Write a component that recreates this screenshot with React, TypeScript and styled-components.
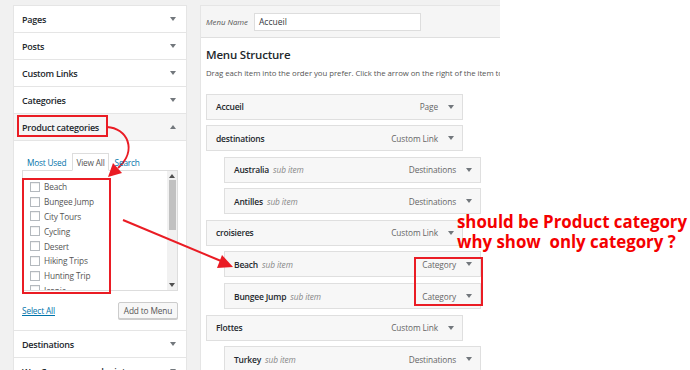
import React from "react";
import styled, {createGlobalStyle} from "styled-components";

const GlobalStyle = createGlobalStyle`
  html, body {
    margin: 0;
    padding: 0;
    background: #fff;
  }
  body {
    font-family: "Open Sans", "Noto Sans", sans-serif;
  }
  * {
    box-sizing: border-box;
  }
`;

const Page = styled.div`
  position: relative;
  width: 690px;
  height: 370px;
  overflow: hidden;
  display: flex;
  background: #fff;
`;

const Admin = styled.div`
  width: 500px;
  flex-shrink: 0;
  display: flex;
  gap: 13px;
  padding: 5px 0 0 13px;
  background: #f1f1f1;
`;

const Sidebar = styled.div`
  width: 174px;
  flex-shrink: 0;
  display: flex;
  flex-direction: column;
`;

const Section = styled.div`
  background: #fff;
  border: 1px solid #e5e5e5;
  border-top: none;
  &:first-child {
    border-top: 1px solid #e5e5e5;
  }
`;

interface OpenProps {
  open?: boolean;
}
const SectionHead = styled.div<OpenProps>`
  height: ${props => (props.open ? "27px" : "26px")};
  display: flex;
  align-items: center;
  justify-content: space-between;
  padding: 0 10px 0 8px;
  font-size: 9px;
  font-weight: 600;
  letter-spacing: -0.25px;
  color: #23282d;
  background: ${props => (props.open ? "#f5f5f5" : "#fff")};
  border-bottom: ${props => (props.open ? "1px solid #e5e5e5" : "none")};
`;

const Caret = styled.span<{up?: boolean; color?: string}>`
  width: 0;
  height: 0;
  border-left: 3px solid transparent;
  border-right: 3px solid transparent;
  ${props =>
    props.up
      ? `border-bottom: 4px solid ${props.color || "#72777c"};`
      : `border-top: 4px solid ${props.color || "#72777c"};`}
`;

const SectionBody = styled.div`
  height: 189px;
  padding: 12px 8px 0 8px;
  display: flex;
  flex-direction: column;
`;

const Tabs = styled.div`
  display: flex;
  align-items: flex-end;
  gap: 2px;
  padding-left: 1px;
  height: 18px;
  margin-bottom: -1px;
  position: relative;
  z-index: 1;
`;

const Tab = styled.span<{active?: boolean}>`
  height: 18px;
  display: flex;
  align-items: center;
  padding: 0 3px;
  font-size: 8.3px;
  letter-spacing: -0.2px;
  color: ${props => (props.active ? "#555" : "#0073aa")};
  background: ${props => (props.active ? "#fff" : "transparent")};
  border: 1px solid ${props => (props.active ? "#ddd" : "transparent")};
  border-bottom-color: ${props => (props.active ? "#fff" : "transparent")};
`;

const ListBox = styled.div`
  height: 121px;
  border: 1px solid #ddd;
  background: #fff;
  display: flex;
  overflow: hidden;
`;

const Items = styled.ul`
  flex: 1;
  list-style: none;
  margin: 0;
  padding: 8.5px 0 0 7px;
  overflow: hidden;
`;

const Item = styled.li`
  height: 14.8px;
  display: flex;
  align-items: center;
  gap: 4px;
  font-size: 8.3px;
  letter-spacing: -0.15px;
  color: #555;
`;

const Check = styled.span`
  width: 10px;
  height: 10px;
  flex-shrink: 0;
  border: 1px solid #b4b9be;
  background: #fff;
  box-shadow: inset 0 1px 1px rgba(0, 0, 0, 0.07);
`;

const ScrollTrack = styled.div`
  width: 10px;
  background: #f1f1f1;
  display: flex;
  flex-direction: column;
  align-items: center;
  justify-content: space-between;
  padding: 3px 0 3px 0;
`;

const Thumb = styled.div`
  width: 7px;
  height: 50px;
  background: #c1c1c1;
  margin-top: 2px;
  margin-bottom: auto;
`;

const Footer = styled.div`
  display: flex;
  align-items: center;
  justify-content: space-between;
  margin-top: 11px;
`;

const Link = styled.a`
  font-size: 8.3px;
  letter-spacing: -0.15px;
  color: #0073aa;
  text-decoration: underline;
`;

const Button = styled.button`
  width: 60px;
  height: 17px;
  padding: 0;
  font-family: inherit;
  font-size: 8.3px;
  letter-spacing: -0.15px;
  color: #555;
  background: #f7f7f7;
  border: 1px solid #ccc;
  border-radius: 2px;
  box-shadow: 0 1px 0 #ccc;
`;

const MenuPanel = styled.div`
  width: 300px;
  display: flex;
  flex-direction: column;
  background: #fff;
  border-left: 1px solid #e5e5e5;
  border-top: 1px solid #e5e5e5;
`;

const MenuHeader = styled.div`
  height: 32px;
  flex-shrink: 0;
  display: flex;
  align-items: center;
  gap: 6px;
  padding-left: 5px;
  background: #f5f5f5;
  border-bottom: 1px solid #dfdfdf;
`;

const NameLabel = styled.span`
  font-size: 7.8px;
  font-style: italic;
  color: #555;
`;

const NameInput = styled.div`
  width: 167px;
  height: 18px;
  display: flex;
  align-items: center;
  padding-left: 4px;
  font-size: 8.5px;
  color: #32373c;
  background: #fff;
  border: 1px solid #ddd;
`;

const MenuBody = styled.div`
  padding: 8px 0 0 5px;
  display: flex;
  flex-direction: column;
`;

const Title = styled.h3`
  margin: 0;
  font-size: 11.5px;
  font-weight: 600;
  letter-spacing: -0.2px;
  color: #23282d;
  line-height: 17px;
`;

const Hint = styled.p`
  margin: 4px 0 0 0;
  font-size: 7.8px;
  letter-spacing: -0.05px;
  color: #555;
  white-space: nowrap;
  line-height: 13px;
`;

const MenuItems = styled.div`
  display: flex;
  flex-direction: column;
  gap: 5.6px;
  margin-top: 13.5px;
`;

const MenuItem = styled.div<{depth: number}>`
  width: 257px;
  height: 26px;
  flex-shrink: 0;
  margin-left: ${props => props.depth * 18}px;
  display: flex;
  align-items: center;
  padding: 0 8px 0 9px;
  background: #f7f7f7;
  border: 1px solid #dfdfdf;
`;

const ItemTitle = styled.span`
  font-size: 8.5px;
  font-weight: 600;
  letter-spacing: -0.2px;
  color: #23282d;
`;

const SubLabel = styled.span`
  margin-left: 4px;
  font-size: 8.3px;
  font-style: italic;
  letter-spacing: -0.1px;
  color: #888;
`;

const ItemType = styled.span`
  margin-left: auto;
  margin-right: 10px;
  font-size: 8.3px;
  letter-spacing: -0.1px;
  color: #666;
`;

const Blank = styled.div`
  flex: 1;
  background: #fff;
`;

const Overlay = styled.div`
  position: absolute;
  inset: 0;
  pointer-events: none;
`;

interface BoxProps {
  x: number;
  y: number;
  w: number;
  h: number;
}
const RedBox = styled.div<BoxProps>`
  position: absolute;
  left: ${props => props.x}px;
  top: ${props => props.y}px;
  width: ${props => props.w}px;
  height: ${props => props.h}px;
  border: 2px solid #ea1c24;
`;

const Note = styled.div`
  position: absolute;
  left: 457px;
  top: 212px;
  font-size: 16.85px;
  font-weight: 700;
  line-height: 20px;
  color: #f40000;
  white-space: pre;
`;

const Arrows = styled.svg`
  position: absolute;
  left: 0;
  top: 0;
`;

const sections = ["Pages", "Posts", "Custom Links", "Categories"];
const productCats = [
  "Beach",
  "Bungee Jump",
  "City Tours",
  "Cycling",
  "Desert",
  "Hiking Trips",
  "Hunting Trip",
  "Iconic"
];
const menuItems = [
  {title: "Accueil", type: "Page", depth: 0},
  {title: "destinations", type: "Custom Link", depth: 0},
  {title: "Australia", type: "Destinations", depth: 1},
  {title: "Antilles", type: "Destinations", depth: 1},
  {title: "croisieres", type: "Custom Link", depth: 0},
  {title: "Beach", type: "Category", depth: 1},
  {title: "Bungee Jump", type: "Category", depth: 1},
  {title: "Flottes", type: "Custom Link", depth: 0},
  {title: "Turkey", type: "Destinations", depth: 1}
];

const App = () => {
  return (
    <Page>
      <GlobalStyle />
      <Admin>
        <Sidebar>
          {sections.map(name => (
            <Section key={name}>
              <SectionHead>
                {name}
                <Caret />
              </SectionHead>
            </Section>
          ))}
          <Section>
            <SectionHead open>
              Product categories
              <Caret up />
            </SectionHead>
            <SectionBody>
              <Tabs>
                <Tab>Most Used</Tab>
                <Tab active>View All</Tab>
                <Tab>Search</Tab>
              </Tabs>
              <ListBox>
                <Items>
                  {productCats.map(name => (
                    <Item key={name}>
                      <Check />
                      {name}
                    </Item>
                  ))}
                </Items>
                <ScrollTrack>
                  <Caret up color="#505050" />
                  <Thumb />
                  <Caret color="#505050" />
                </ScrollTrack>
              </ListBox>
              <Footer>
                <Link>Select All</Link>
                <Button>Add to Menu</Button>
              </Footer>
            </SectionBody>
          </Section>
          <Section>
            <SectionHead>
              Destinations
              <Caret />
            </SectionHead>
          </Section>
          <Section>
            <SectionHead>
              WooCommerce endpoints
              <Caret />
            </SectionHead>
          </Section>
        </Sidebar>
        <MenuPanel>
          <MenuHeader>
            <NameLabel>Menu Name</NameLabel>
            <NameInput>Accueil</NameInput>
          </MenuHeader>
          <MenuBody>
            <Title>Menu Structure</Title>
            <Hint>
              Drag each item into the order you prefer. Click the arrow on the right of the item to
              reveal additional configuration options.
            </Hint>
            <MenuItems>
              {menuItems.map((item, index) => (
                <MenuItem key={index} depth={item.depth}>
                  <ItemTitle>{item.title}</ItemTitle>
                  {item.depth > 0 && <SubLabel>sub item</SubLabel>}
                  <ItemType>{item.type}</ItemType>
                  <Caret />
                </MenuItem>
              ))}
            </MenuItems>
          </MenuBody>
        </MenuPanel>
      </Admin>
      <Blank />
      <Overlay>
        <RedBox x={17} y={115} w={91} h={22} />
        <RedBox x={22} y={178} w={89} h={116} />
        <RedBox x={414} y={257} w={69} h={49} />
        <Arrows width="690" height="370" viewBox="0 0 690 370">
          <path d="M107 127 C127 128 138 150 118 168" fill="none" stroke="#ea1c24" strokeWidth="2" />
          <polygon points="108,177 113,163 122,173" fill="#ea1c24" />
          <line x1="123" y1="220" x2="221" y2="261" stroke="#ea1c24" strokeWidth="2" />
          <polygon points="233,267 222,255 217,268" fill="#ea1c24" />
        </Arrows>
        <Note>{"should be Product category\nwhy show  only category ?"}</Note>
      </Overlay>
    </Page>
  );
};

export default App;
